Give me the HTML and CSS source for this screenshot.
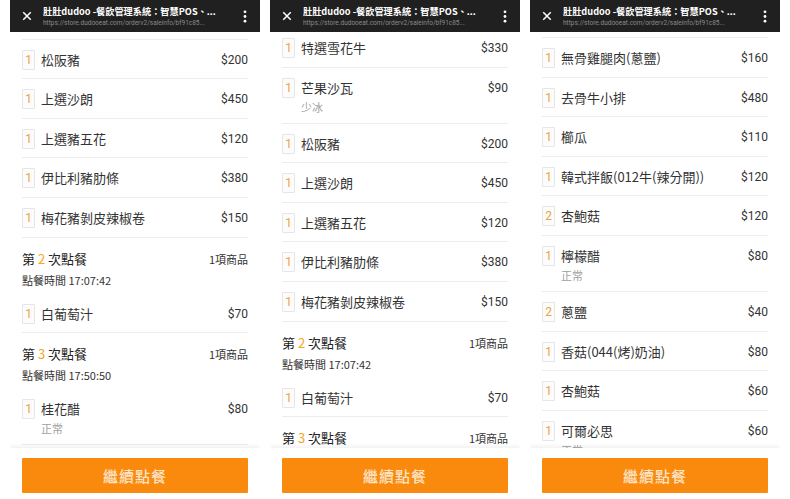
FILE: index.html
```html
<!DOCTYPE html>
<html lang="zh-Hant">
<head>
    <meta charset="UTF-8">
    <meta name="viewport" content="width=device-width, initial-scale=1.0">
    <title>訂單明細</title>
    <link rel="stylesheet" href="styles.css">
</head>
<body>

<div class="screens">

    <!-- screen 1 -->
    <section class="phone">
        <header class="bar">
            <svg class="bar-close" viewBox="0 0 12 12"><path d="M1.5 1.5l9 9M10.5 1.5l-9 9"/></svg>
            <div class="bar-text">
                <div class="bar-title">肚肚dudoo -餐飲管理系統：智慧POS、...</div>
                <div class="bar-url">https://store.dudooeat.com/orderv2/saleinfo/bf91c85...</div>
            </div>
            <svg class="bar-more" viewBox="0 0 4 14"><circle cx="2" cy="2" r="1.5"/><circle cx="2" cy="7" r="1.5"/><circle cx="2" cy="12" r="1.5"/></svg>
        </header>
        <div class="viewport">
            <div class="list list-deep">
                <div class="row"><span class="qty">1</span><div class="name">特選雪花牛</div><span class="price">$330</span></div>
                <div class="row row-note"><span class="qty">1</span><div class="name">芒果沙瓦<div class="note">少冰</div></div><span class="price">$90</span></div>
                <div class="row"><span class="qty">1</span><div class="name">松阪豬</div><span class="price">$200</span></div>
                <div class="row"><span class="qty">1</span><div class="name">上選沙朗</div><span class="price">$450</span></div>
                <div class="row"><span class="qty">1</span><div class="name">上選豬五花</div><span class="price">$120</span></div>
                <div class="row"><span class="qty">1</span><div class="name">伊比利豬肋條</div><span class="price">$380</span></div>
                <div class="row"><span class="qty">1</span><div class="name">梅花豬剝皮辣椒卷</div><span class="price">$150</span></div>
                <div class="round">
                    <div class="round-head"><span>第 <b>2</b> 次點餐</span><span class="round-count">1項商品</span></div>
                    <div class="round-time">點餐時間 17:07:42</div>
                </div>
                <div class="row"><span class="qty">1</span><div class="name">白葡萄汁</div><span class="price">$70</span></div>
                <div class="round">
                    <div class="round-head"><span>第 <b>3</b> 次點餐</span><span class="round-count">1項商品</span></div>
                    <div class="round-time">點餐時間 17:50:50</div>
                </div>
                <div class="row row-note"><span class="qty">1</span><div class="name">桂花醋<div class="note">正常</div></div><span class="price">$80</span></div>
            </div>
        </div>
        <footer class="foot"><button class="btn">繼續點餐</button></footer>
    </section>

    <!-- screen 2 -->
    <section class="phone">
        <header class="bar">
            <svg class="bar-close" viewBox="0 0 12 12"><path d="M1.5 1.5l9 9M10.5 1.5l-9 9"/></svg>
            <div class="bar-text">
                <div class="bar-title">肚肚dudoo -餐飲管理系統：智慧POS、...</div>
                <div class="bar-url">https://store.dudooeat.com/orderv2/saleinfo/bf91c85...</div>
            </div>
            <svg class="bar-more" viewBox="0 0 4 14"><circle cx="2" cy="2" r="1.5"/><circle cx="2" cy="7" r="1.5"/><circle cx="2" cy="12" r="1.5"/></svg>
        </header>
        <div class="viewport">
            <div class="list list-mid">
                <div class="row"><span class="qty">1</span><div class="name">特選雪花牛</div><span class="price">$330</span></div>
                <div class="row row-note"><span class="qty">1</span><div class="name">芒果沙瓦<div class="note">少冰</div></div><span class="price">$90</span></div>
                <div class="row"><span class="qty">1</span><div class="name">松阪豬</div><span class="price">$200</span></div>
                <div class="row"><span class="qty">1</span><div class="name">上選沙朗</div><span class="price">$450</span></div>
                <div class="row"><span class="qty">1</span><div class="name">上選豬五花</div><span class="price">$120</span></div>
                <div class="row"><span class="qty">1</span><div class="name">伊比利豬肋條</div><span class="price">$380</span></div>
                <div class="row"><span class="qty">1</span><div class="name">梅花豬剝皮辣椒卷</div><span class="price">$150</span></div>
                <div class="round">
                    <div class="round-head"><span>第 <b>2</b> 次點餐</span><span class="round-count">1項商品</span></div>
                    <div class="round-time">點餐時間 17:07:42</div>
                </div>
                <div class="row"><span class="qty">1</span><div class="name">白葡萄汁</div><span class="price">$70</span></div>
                <div class="round">
                    <div class="round-head"><span>第 <b>3</b> 次點餐</span><span class="round-count">1項商品</span></div>
                    <div class="round-time">點餐時間 17:50:50</div>
                </div>
                <div class="row row-note"><span class="qty">1</span><div class="name">桂花醋<div class="note">正常</div></div><span class="price">$80</span></div>
            </div>
        </div>
        <footer class="foot"><button class="btn">繼續點餐</button></footer>
    </section>

    <!-- screen 3 -->
    <section class="phone">
        <header class="bar">
            <svg class="bar-close" viewBox="0 0 12 12"><path d="M1.5 1.5l9 9M10.5 1.5l-9 9"/></svg>
            <div class="bar-text">
                <div class="bar-title">肚肚dudoo -餐飲管理系統：智慧POS、...</div>
                <div class="bar-url">https://store.dudooeat.com/orderv2/saleinfo/bf91c85...</div>
            </div>
            <svg class="bar-more" viewBox="0 0 4 14"><circle cx="2" cy="2" r="1.5"/><circle cx="2" cy="7" r="1.5"/><circle cx="2" cy="12" r="1.5"/></svg>
        </header>
        <div class="viewport">
            <div class="list list-top">
                <div class="row"><span class="qty">1</span><div class="name">無骨雞腿肉(蔥鹽)</div><span class="price">$160</span></div>
                <div class="row"><span class="qty">1</span><div class="name">去骨牛小排</div><span class="price">$480</span></div>
                <div class="row"><span class="qty">1</span><div class="name">櫛瓜</div><span class="price">$110</span></div>
                <div class="row"><span class="qty">1</span><div class="name">韓式拌飯(012牛(辣分開))</div><span class="price">$120</span></div>
                <div class="row"><span class="qty">2</span><div class="name">杏鮑菇</div><span class="price">$120</span></div>
                <div class="row row-note"><span class="qty">1</span><div class="name">檸檬醋<div class="note">正常</div></div><span class="price">$80</span></div>
                <div class="row"><span class="qty">2</span><div class="name">蔥鹽</div><span class="price">$40</span></div>
                <div class="row"><span class="qty">1</span><div class="name">香菇(044(烤)奶油)</div><span class="price">$80</span></div>
                <div class="row"><span class="qty">1</span><div class="name">杏鮑菇</div><span class="price">$60</span></div>
                <div class="row row-note"><span class="qty">1</span><div class="name">可爾必思<div class="note">正常</div></div><span class="price">$60</span></div>
            </div>
        </div>
        <footer class="foot"><button class="btn">繼續點餐</button></footer>
    </section>

</div>

</body>
</html>
```

FILE: styles.css
```css
* {
    margin: 0;
    padding: 0;
    box-sizing: border-box;
}

body {
    font-family: 'Noto Sans CJK TC', 'Noto Sans', sans-serif;
    background: #fff;
    color: #333;
    height: 499px;
    overflow: hidden;
}

.screens {
    display: flex;
    gap: 10px;
    padding: 0 10px;
    height: 499px;
}

.phone {
    width: 250px;
    height: 499px;
    display: flex;
    flex-direction: column;
    background: #fff;
    overflow: hidden;
}

/* browser title bar */
.bar {
    height: 32px;
    flex: none;
    background: #202020;
    display: flex;
    align-items: center;
    padding: 0 13px 0 12px;
}

.bar-close {
    width: 10px;
    height: 10px;
    flex: none;
    stroke: #fff;
    stroke-width: 1.8;
    fill: none;
}

.bar-text {
    flex: 1;
    min-width: 0;
    margin-left: 11px;
    overflow: hidden;
}

.bar-title {
    color: #fff;
    font-size: 9.2px;
    font-weight: bold;
    line-height: 13px;
    white-space: nowrap;
}

.bar-url {
    color: #8a8a8a;
    font-family: 'Roboto', sans-serif;
    font-size: 6.5px;
    line-height: 10px;
    white-space: nowrap;
}

.bar-more {
    width: 4px;
    height: 13px;
    flex: none;
    margin-left: 8px;
    fill: #fff;
}

/* scrolled order list */
.viewport {
    flex: 1;
    overflow: hidden;
    padding: 0 12px;
}

.list-mid {
    margin-top: -4px;
}

.list-deep {
    margin-top: -88px;
}

.list-top {
    margin-top: 5px;
    border-top: 1px solid #ececec;
}

.row {
    display: flex;
    align-items: flex-start;
    height: 39.6px;
    padding-top: 10px;
    border-bottom: 1px solid #ececec;
}

.row-note {
    height: 56px;
}

.qty {
    width: 13px;
    height: 20px;
    flex: none;
    border: 1px solid #e6e6e6;
    border-radius: 1px;
    background: #fcfcfc;
    color: #eea23c;
    font-family: 'Roboto', sans-serif;
    font-size: 12px;
    line-height: 18px;
    text-align: center;
}

.name {
    flex: 1;
    margin-left: 6px;
    font-size: 13px;
    line-height: 20px;
    color: #333;
}

.note {
    font-size: 11px;
    line-height: 18px;
    color: #a0a0a0;
}

.price {
    flex: none;
    font-family: 'Roboto', sans-serif;
    font-size: 12px;
    line-height: 20px;
    color: #333;
}

.round {
    height: 56px;
    padding-top: 11px;
}

.round-head {
    display: flex;
    justify-content: space-between;
    font-size: 13px;
    line-height: 20px;
    color: #222;
}

.round-head b {
    color: #f5a623;
    font-weight: normal;
}

.round-count {
    font-size: 11px;
    color: #333;
}

.round-time {
    font-size: 11px;
    line-height: 22px;
    color: #333;
}

/* bottom action */
.foot {
    height: 51px;
    flex: none;
    padding: 10px 12px 6px;
    background: #fff;
    box-shadow: 0 -2px 4px rgba(0, 0, 0, 0.06);
    position: relative;
}

.btn {
    width: 100%;
    height: 35px;
    border: none;
    border-radius: 1px;
    background: #f98a0e;
    color: #fde3c4;
    font-family: 'Noto Sans CJK TC', sans-serif;
    font-size: 15px;
    font-weight: 500;
    letter-spacing: 1px;
}
```
